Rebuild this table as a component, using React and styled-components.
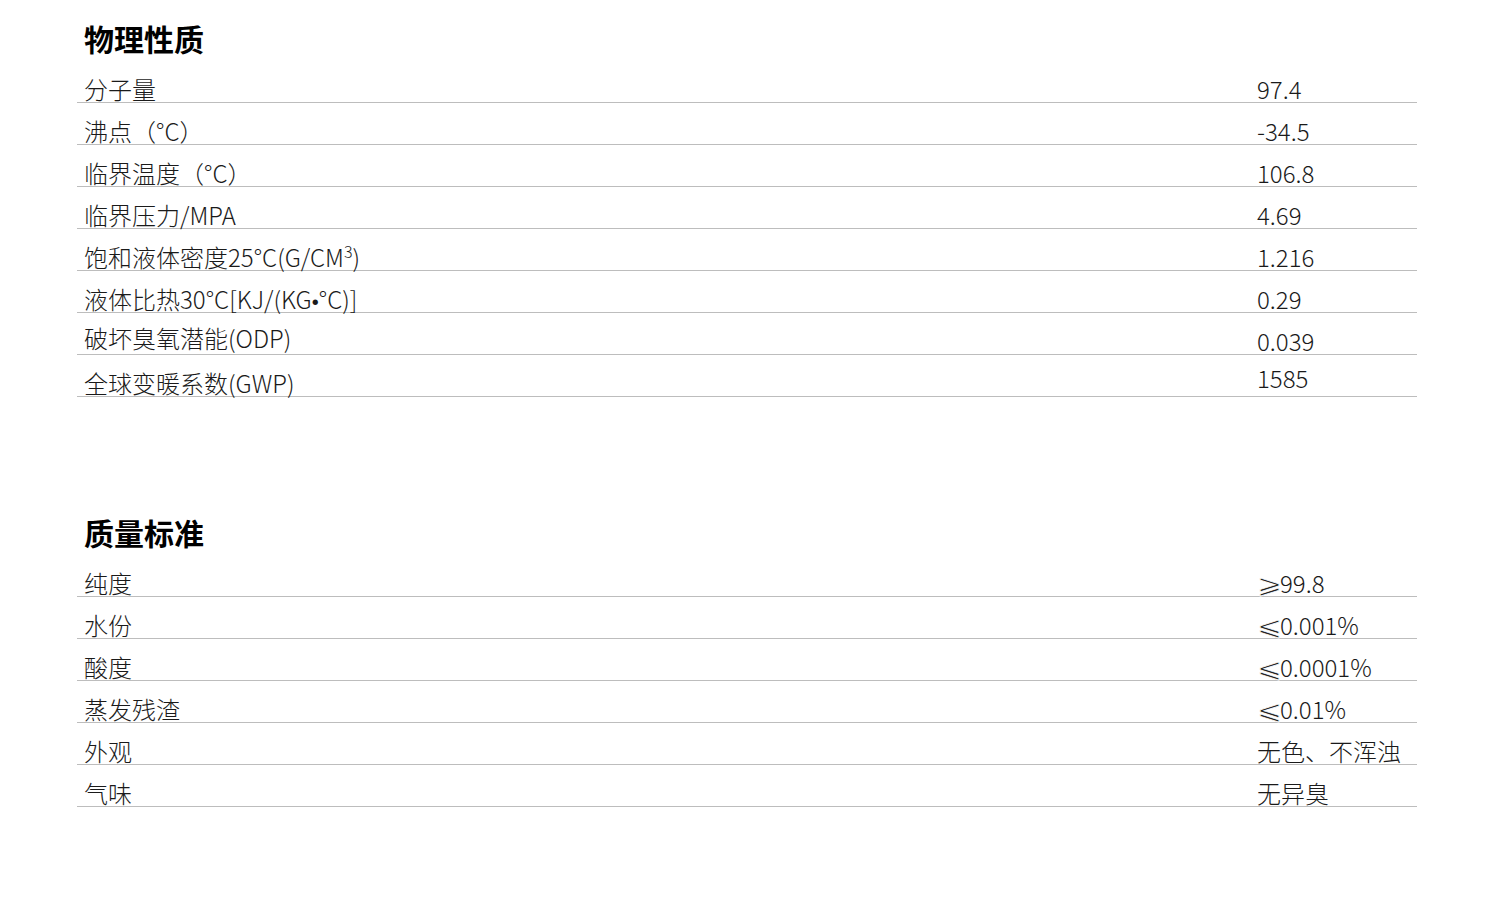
import React from 'react';
import styled, { createGlobalStyle } from 'styled-components';

const GlobalStyle = createGlobalStyle`
  body {
    margin: 0;
    background: #ffffff;
    font-family: "Noto Sans CJK SC", "Noto Sans", sans-serif;
    color: #111111;
  }
`;

// Styled Components
const Page = styled.div`
  width: 1340px;
  padding: 21px 0 0 77px;
  display: flex;
  flex-direction: column;
  gap: 118px;
`;

const Block = styled.section`
  display: flex;
  flex-direction: column;
`;

const Title = styled.h2`
  margin: 0 0 6px 7px;
  font-size: 30px;
  font-weight: 700;
  line-height: 34px;
  color: #000;
`;

const Table = styled.div`
  display: flex;
  flex-direction: column;
`;

const Row = styled.div`
  height: 41px;
  border-bottom: 1px solid #bdbdbd;
  display: grid;
  grid-template-columns: 1180px 1fr;
  align-items: end;
  font-size: 24px;
  font-weight: 300;
  line-height: 30px;
  color: #1a1a1a;

  sup {
    font-size: 16px;
    line-height: 0;
    vertical-align: 9px;
  }
`;

const Label = styled.div`
  padding-left: 7px;
  white-space: nowrap;
  transform: translateY(${p => 2 - p.$lift}px);
`;

const Value = styled.div`
  white-space: nowrap;
  transform: translateY(${p => 2 - p.$lift}px);
`;

const Dot = styled.span`
  font-family: "DejaVu Sans", sans-serif;
  font-size: 20px;
  line-height: 0;
`;

/* wide, thin comparison sign (⩽ / ⩾) */
const Sign = styled.span`
  display: inline-block;
  width: 23px;
  font-family: "DejaVu Sans", sans-serif;
  font-size: 26px;
  font-weight: 200;
  line-height: 24px;
  color: #222;
  -webkit-text-stroke: 0.7px #fff;
  transform: scaleX(1.15);
  transform-origin: left center;
`;

const physical = [
  { label: '分子量', value: '97.4' },
  { label: '沸点（°C）', value: '-34.5' },
  { label: '临界温度（°C）', value: '106.8' },
  { label: '临界压力/MPA', value: '4.69' },
  { label: <>饱和液体密度25°C(G/CM<sup>3</sup>)</>, value: '1.216' },
  { label: <>液体比热30°C[KJ/(KG<Dot>•</Dot>°C)]</>, value: '0.29' },
  { label: '破坏臭氧潜能(ODP)', value: '0.039', labelLift: 3 },
  { label: '全球变暖系数(GWP)', value: '1585', valueLift: 5 },
];

const quality = [
  { label: '纯度', value: <><Sign>⩾</Sign>99.8</> },
  { label: '水份', value: <><Sign>⩽</Sign>0.001%</> },
  { label: '酸度', value: <><Sign>⩽</Sign>0.0001%</> },
  { label: '蒸发残渣', value: <><Sign>⩽</Sign>0.01%</> },
  { label: '外观', value: '无色、不浑浊' },
  { label: '气味', value: '无异臭' },
];

const Section = ({ title, rows }) => (
  <Block>
    <Title>{title}</Title>
    <Table>
      {rows.map((r, i) => (
        <Row key={i}>
          <Label $lift={r.labelLift || 0}>{r.label}</Label>
          <Value $lift={r.valueLift || 0}>{r.value}</Value>
        </Row>
      ))}
    </Table>
  </Block>
);

const App = () => (
  <Page>
    <GlobalStyle />
    <Section title="物理性质" rows={physical} />
    <Section title="质量标准" rows={quality} />
  </Page>
);

export default App;
